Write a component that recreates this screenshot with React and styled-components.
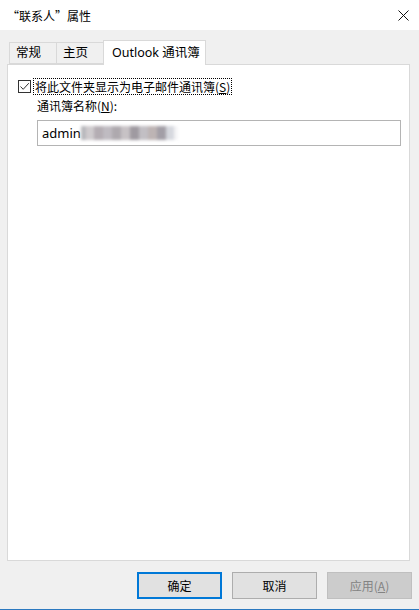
import React from "react";
import styled, { createGlobalStyle } from "styled-components";

const GlobalStyle = createGlobalStyle`
  html, body {
    margin: 0;
    padding: 0;
    background: #f0f0f0;
  }
  body {
    font-family: "Segoe UI", "Noto Sans", "Noto Sans CJK SC", sans-serif;
    font-size: 12px;
    color: #000;
  }
`;

const Window = styled.div`
  width: 419px;
  height: 610px;
  display: flex;
  flex-direction: column;
  background: #f0f0f0;
  border-bottom: 1px solid #2b79c0;
  box-sizing: border-box;
  font-family: "Segoe UI", "Noto Sans", "Noto Sans CJK SC", sans-serif;
  font-size: 12px;
`;

const TitleBar = styled.div`
  height: 30px;
  flex: none;
  background: #fff;
  display: flex;
  align-items: center;
  justify-content: space-between;
  padding: 0 10px 0 7px;
  font-family: "Noto Sans CJK SC", sans-serif;
`;

const Body = styled.div`
  flex: 1;
  display: flex;
  flex-direction: column;
  padding: 9px 9px 0 7px;
  min-height: 0;
`;

const TabRow = styled.div`
  display: flex;
  align-items: flex-end;
  height: 25px;
  padding-left: 2px;
  position: relative;
  z-index: 1;
`;

const Tab = styled.div`
  box-sizing: border-box;
  width: ${(p) => (p.$active ? "103px" : "48px")};
  height: ${(p) => (p.$active ? "25px" : "22px")};
  margin-bottom: ${(p) => (p.$active ? "-1px" : "0")};
  padding-left: ${(p) => (p.$active ? "8px" : "6px")};
  background: ${(p) => (p.$active ? "#fff" : "#f0f0f0")};
  border: 1px solid #d9d9d9;
  border-bottom: ${(p) => (p.$active ? "none" : "1px solid #d9d9d9")};
  margin-left: ${(p) => (p.$first ? "0" : "-1px")};
  display: flex;
  align-items: center;
  line-height: 1;
  white-space: nowrap;
  font-family: "Noto Sans", "Noto Sans CJK SC", sans-serif;
  font-size: 12.5px;
`;

const Panel = styled.div`
  flex: 1;
  background: #fff;
  border: 1px solid #d9d9d9;
  padding: 13px 10px 0 10px;
  display: flex;
  flex-direction: column;
`;

const CheckRow = styled.label`
  display: flex;
  align-items: center;
  gap: 2px;
  height: 17px;
`;

const CheckBox = styled.span`
  width: 13px;
  height: 13px;
  box-sizing: border-box;
  border: 1px solid #333;
  background: #fff;
  display: flex;
  align-items: center;
  justify-content: center;
`;

const FocusLabel = styled.span`
  border: 1px dotted #000;
  padding: 0 1px;
  height: 17px;
  box-sizing: border-box;
  display: flex;
  align-items: center;
  font-family: "Noto Sans CJK SC", sans-serif;
  white-space: nowrap;
`;

const Field = styled.div`
  margin-left: 19px;
  display: flex;
  flex-direction: column;
`;

const FieldLabel = styled.div`
  margin-top: 2px;
  height: 18px;
  line-height: 18px;
  font-family: "Noto Sans CJK SC", sans-serif;
`;

const Input = styled.div`
  margin-top: 5px;
  width: 364px;
  height: 26px;
  box-sizing: border-box;
  border: 1px solid #b4b4b4;
  display: flex;
  align-items: center;
  padding-left: 4px;
  font-family: "Noto Sans", sans-serif;
  font-size: 13px;
`;

const Blur = styled.span`
  display: flex;
  height: 14px;
  filter: blur(1.4px);
`;

const BlurCell = styled.span`
  width: ${(p) => p.$w}px;
  height: 14px;
  background: ${(p) => p.$c};
`;

const Footer = styled.div`
  flex: none;
  display: flex;
  justify-content: flex-end;
  gap: 10px;
  padding: 11px 7px 10px 0;
  margin-right: -9px;
`;

const Button = styled.div`
  width: 85px;
  height: 27px;
  box-sizing: border-box;
  display: flex;
  align-items: center;
  justify-content: center;
  background: ${(p) => (p.$disabled ? "#cccccc" : "#e1e1e1")};
  border: ${(p) =>
    p.$default ? "2px solid #0078d7" : p.$disabled ? "1px solid #bfbfbf" : "1px solid #adadad"};
  color: ${(p) => (p.$disabled ? "#838383" : "#000")};
  font-family: "Noto Sans CJK SC", sans-serif;
`;

const U = styled.span`
  text-decoration: underline;
`;

const Underline = ({ children }) => <U>{children}</U>;

const blurCells = [
  ["#b8b8bc", 5],
  ["#cfcbce", 8],
  ["#b4adb3", 9],
  ["#bfbbc1", 9],
  ["#aea9ae", 9],
  ["#c7c2c5", 9],
  ["#9f9aa1", 9],
  ["#c2bfc4", 9],
  ["#bdb4b4", 9],
  ["#a29ea6", 9],
  ["#d6d8de", 8],
  ["#f4f4f6", 4],
];

export default function App() {
  return (
    <>
      <GlobalStyle />
      <Window>
        <TitleBar>
          <span>“联系人”属性</span>
          <svg width="11" height="11" viewBox="0 0 11 11">
            <path d="M0.5 0.5 L10.5 10.5 M10.5 0.5 L0.5 10.5" stroke="#111" strokeWidth="1" />
          </svg>
        </TitleBar>
        <Body>
          <TabRow>
            <Tab $first>常规</Tab>
            <Tab>主页</Tab>
            <Tab $active>Outlook 通讯簿</Tab>
          </TabRow>
          <Panel>
            <CheckRow>
              <CheckBox>
                <svg width="11" height="11" viewBox="0 0 11 11">
                  <path d="M1.5 5.5 L4.2 8.3 L9.8 2.2" fill="none" stroke="#333" strokeWidth="1" />
                </svg>
              </CheckBox>
              <FocusLabel>
                将此文件夹显示为电子邮件通讯簿(<Underline>S</Underline>)
              </FocusLabel>
            </CheckRow>
            <Field>
              <FieldLabel>
                通讯簿名称(<Underline>N</Underline>):
              </FieldLabel>
              <Input>
                admin
                <Blur>
                  {blurCells.map(([c, w], i) => (
                    <BlurCell key={i} $c={c} $w={w} />
                  ))}
                </Blur>
              </Input>
            </Field>
          </Panel>
          <Footer>
            <Button $default>确定</Button>
            <Button>取消</Button>
            <Button $disabled>
              应用(<Underline>A</Underline>)
            </Button>
          </Footer>
        </Body>
      </Window>
    </>
  );
}
